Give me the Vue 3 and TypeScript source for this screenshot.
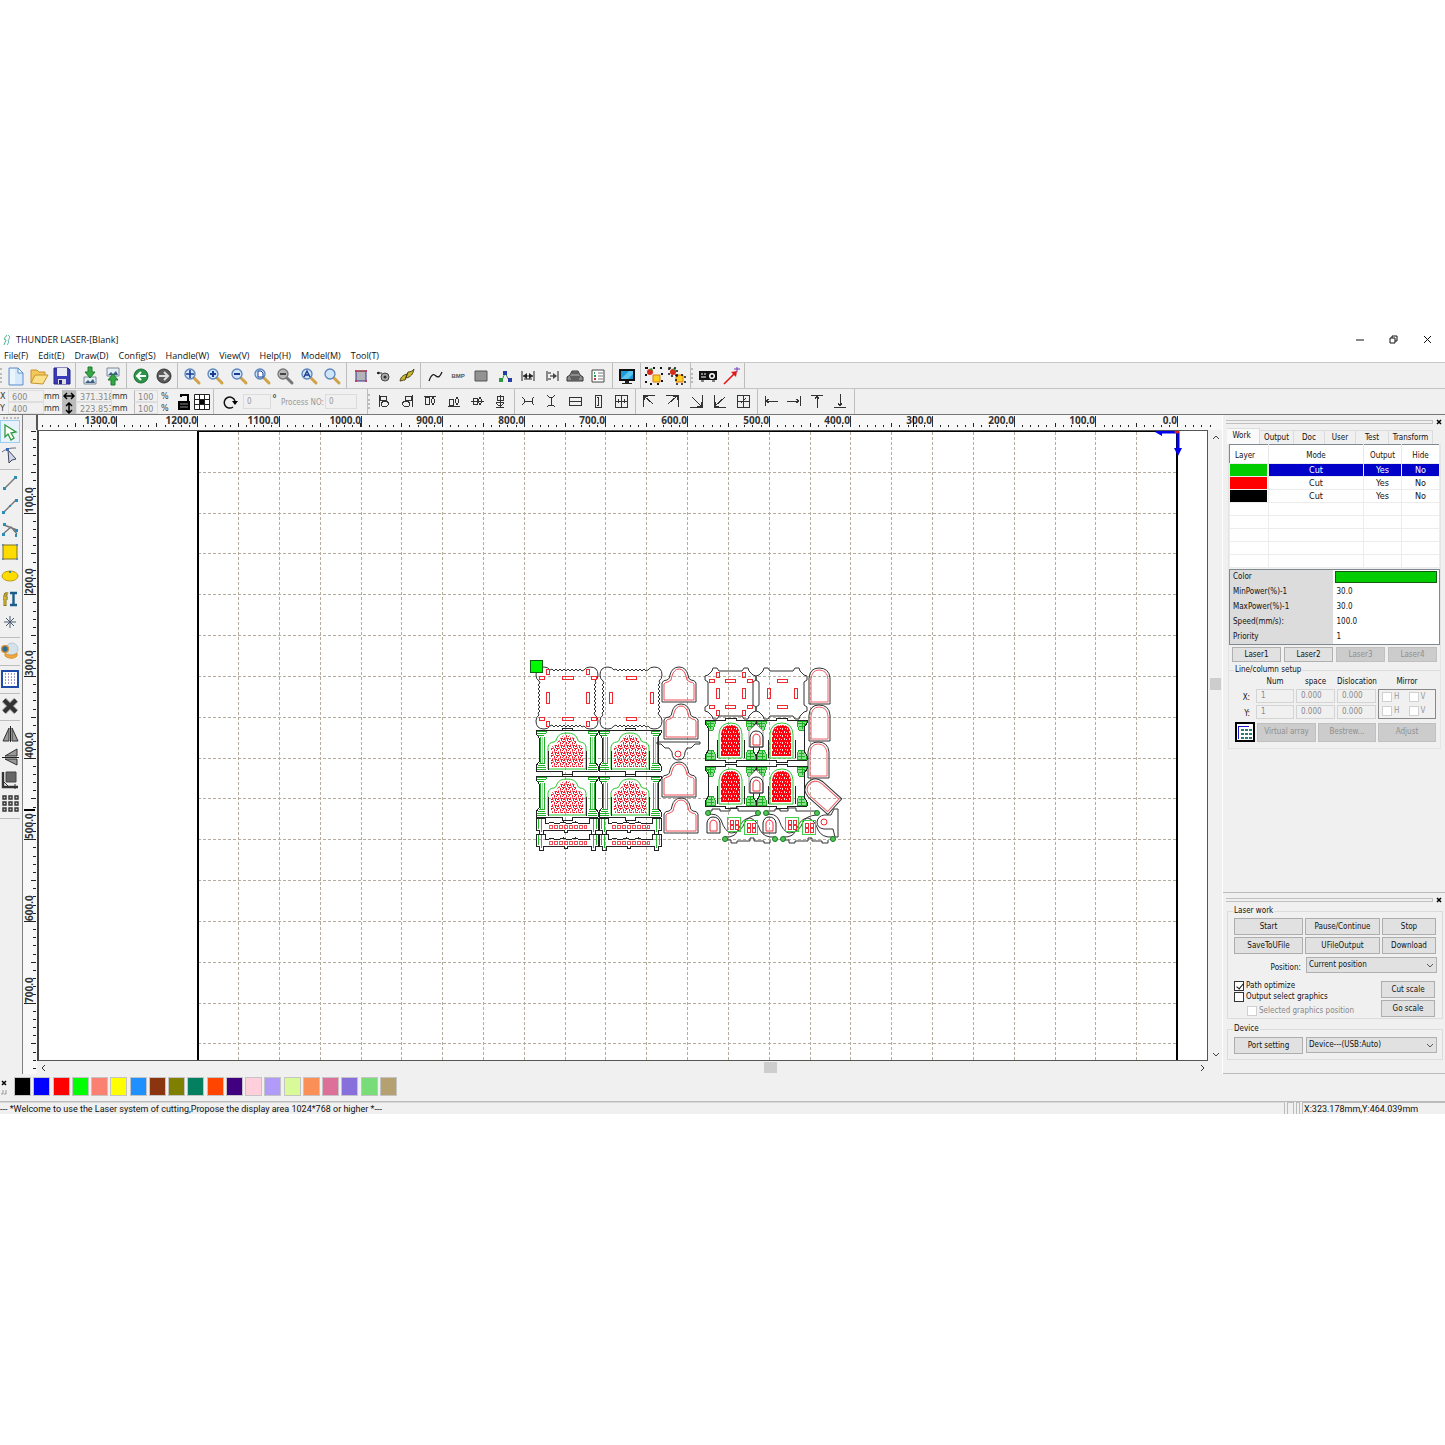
<script setup lang="ts">
import { ref } from 'vue'

interface Tool { name: string; icon: string }
interface Group { size: number; tools: Tool[]; grip?: boolean }

const t = (...names: string[]): Tool[] => names.map((n) => ({ name: n, icon: n }))

const menus = ['File(F)', 'Edit(E)', 'Draw(D)', 'Config(S)', 'Handle(W)', 'View(V)', 'Help(H)', 'Model(M)', 'Tool(T)']

const lens = (inner: string, rim = '#5a84bc', fill = '#cfe4f8', handle = '#d0a24a') =>
  `<path d="M12 12l5 5" stroke="${handle}" stroke-width="3" stroke-linecap="round"/><circle cx="8" cy="8" r="5" fill="${fill}" stroke="${rim}" stroke-width="1.3"/>${inner}`

const line = (d: string) => `<path d="${d}" fill="none" stroke="#333"/>`

const icons: Record<string, string> = {
  new: '<path d="M3 2h9l5 5v12H3z" fill="#d5e9fb" stroke="#5a8fc8"/><path d="M12 2v5h5z" fill="#fff" stroke="#5a8fc8"/><path d="M4 3h5v15H4z" fill="#fff" opacity=".5"/>',
  open: '<path d="M2 17V4h6l2 2h6v3" fill="#f3c95a" stroke="#c8922a"/><path d="M2 17l4-8h13l-5 9z" fill="#fbe08a" stroke="#c8922a"/>',
  save: '<path d="M2 2h14l2 2v14H2z" fill="#3a3ab8" stroke="#22228a"/><path d="M5 2h10v8H5z" fill="#e8eaf4"/><path d="M6 13h8v5H6z" fill="#ddd"/><path d="M7 14h3v4H7z" fill="#22228a"/>',
  import: '<path d="M4 11h12v7H4z" fill="#e6eef6" stroke="#7a8894"/><path d="M5 17l3-3 2 2 3-3 2 4z" fill="#3d5f86"/><path d="M8 1h4v5h3l-5 6-5-6h3z" fill="#35a845" stroke="#1c7a2c"/>',
  export: '<path d="M4 2h12v8H4z" fill="#e6eef6" stroke="#7a8894"/><path d="M5 9l3-3 2 2 3-3 2 4z" fill="#3d5f86"/><path d="M8 19h4v-5h3l-5-6-5 6h3z" fill="#35a845" stroke="#1c7a2c"/>',
  undo: '<circle cx="10" cy="10" r="7" fill="#2c9448" stroke="#166a2c"/><path d="M15 10H6m4-4l-4 4 4 4" fill="none" stroke="#fff" stroke-width="2"/>',
  redo: '<circle cx="10" cy="10" r="7" fill="#5a5a5a" stroke="#333"/><path d="M5 10h9m-4-4l4 4-4 4" fill="none" stroke="#ddd" stroke-width="2"/>',
  'zoom pan': lens('<path d="M8 4v8M4 8h8" stroke="#1c3c90" stroke-width="1.6"/>'),
  'zoom in': lens('<path d="M8 5v6M5 8h6" stroke="#1c3c90" stroke-width="2"/>'),
  'zoom out': lens('<path d="M5 8h6" stroke="#1c3c90" stroke-width="2"/>'),
  'zoom page': lens('<path d="M6 5h3l2 2v4H6z" fill="#fff" stroke="#1c3c90"/>'),
  'zoom data': lens('<path d="M5 8h6" stroke="#444" stroke-width="2"/>', '#777', '#b8b8b8', '#777'),
  'zoom all': lens('<path d="M5 11l3-6 3 6M6 9h4" fill="none" stroke="#1c3c90" stroke-width="1.4"/>'),
  'zoom frame': lens(''),
  'frame': '<path d="M5 5h10v10H5z" fill="#b4b4b8" stroke="#38308c"/><path d="M5 5h10" stroke="#c0392b"/><path d="M4 4h2v2H4zM14 4h2v2h-2zM4 14h2v2H4zM14 14h2v2h-2z" fill="#c04060"/>',
  'gear': '<circle cx="11" cy="11" r="4" fill="#aaa" stroke="#444"/><circle cx="11" cy="11" r="1.5" fill="#333"/><path d="M3 7h5M3 7l2-1v2z" stroke="#222" fill="#222"/>',
  'link': '<path d="M3 15c1-5 4-6 7-7l-2 6c-2 0-4 1-5 1zM9 12l2-6c2 0 5-1 6-3-1 5-3 8-8 9z" fill="#c9b62a" stroke="#4a4420"/>',
  'curve': '<path d="M4 15c3-8 5-7 7-5s4 1 6-4" fill="none" stroke="#111" stroke-width="1.2"/>',
  'fill': '<path d="M4 5h12v10H4z" fill="#929292" stroke="#555"/>',
  'nodes': '<path d="M7 14l3-7 4 7" fill="none" stroke="#2a9a4a"/><path d="M8 5h4v4H8zM13 12h4v4h-4z" fill="#283ca8"/><path d="M4 12h4v4H4z" fill="#2c9a3c"/>',
  'gap': '<path d="M4 5v10M16 5v10M5 10h10M6 13h8" stroke="#222" fill="none"/><path d="M5 10l4-3v6zM15 10l-4-3v6z" fill="#222"/>',
  'offset': '<path d="M5 5v10M16 5v10M6 7h3M6 13h3M8 10h6" stroke="#222" fill="none"/><path d="M15 10l-4-3v6z" fill="#444"/>',
  'preview': '<path d="M5 9l2-4h6l2 4 3 2v4H2v-4z" fill="#8c8c8c" stroke="#333"/><path d="M5 11h10M6 13h8M7 7h6" stroke="#333"/>',
  'list': '<path d="M4 4h12v12H4z" fill="#fff" stroke="#444"/><path d="M6 7h1M6 10h2" stroke="#2a9a4a" stroke-width="2"/><path d="M6 13h2" stroke="#c33" stroke-width="2"/><path d="M10 7h5M10 10h5M10 13h5" stroke="#777"/>',
  'monitor': '<path d="M2 3h16v12H2z" fill="#111"/><path d="M4 5h12v8H4z" fill="#1a9cd8"/><path d="M4 13l8-8h4v3l-5 5z" fill="#5cc4f0"/><path d="M8 15h4v2h3v1H5v-1h3z" fill="#222"/>',
  'group': '<circle cx="6" cy="6" r="3" fill="#d62c1c"/><path d="M5 3l3-1 1 3z" fill="#2a9a2a"/><path d="M9 9h7v7H9z" fill="#f8d020" stroke="#e07818"/><path d="M2 2h16v16H2z" fill="none" stroke="#111" stroke-width="2" stroke-dasharray="2 5"/>',
  'ungroup': '<circle cx="6" cy="6" r="3" fill="#d62c1c"/><path d="M5 3l3-1 1 3z" fill="#2a9a2a"/><path d="M9 9h7v7H9z" fill="#f8d020" stroke="#e07818"/><path d="M2 2h8v8H2zM9 9h9v9H9z" fill="none" stroke="#111" stroke-width="1.500" stroke-dasharray="2 3"/>',
  'projector': '<path d="M1 5h18v9H1z" fill="#111"/><circle cx="14" cy="10" r="3" fill="#fff"/><circle cx="14" cy="10" r="1.5" fill="#111"/><path d="M3 8h2M6 8h2M3 11h5" stroke="#fff"/><path d="M3 15h3M14 15h3" stroke="#111"/>',
  'laser': '<path d="M3 18L14 7" stroke="#e01818" stroke-width="1.6"/><path d="M10 6l6-1-1 6z" fill="#e01818"/><path d="M16 1v5M13 3h6" stroke="#7838b8"/>',
  'align left': line('M5 4v12M6 5h6v4H6zM7 12l3-2h3l2 3-2 2H8z'),
  'align right': line('M15 4v12M14 5H8v4h6zM13 12l-3-2H7l-2 3 2 2h5z'),
  'align top': line('M4 5h12M5 6h4v7H5zM13 6l2 4-2 4-2-4z'),
  'align bottom': line('M4 15h12M5 14h4V8H5zM13 6l2 4-2 4-2-4z'),
  'align middle': line('M4 10h13M6 7h4v6H6zM13 6l2 4-2 4-2-4z'),
  'align center': line('M10 4v12M7 5h6v4H7zM6 12l2-1h4l2 1-2 2H8zM6 16h8'),
  'same space h': line('M4 6l2 2v4l-2 2M6 10h8M16 6l-2 2v4l2 2'),
  'same space v': line('M6 4l2 2h4l2-2M10 6v8M6 16l2-2h4l2 2'),
  'same width': line('M4 6h12v8H4zM4 10h12'),
  'same height': line('M7 4h6v12H7zM10 6v8M9 6h2M9 14h2'),
  'same size': line('M4 4h12v12H4zM4 10h12M10 4v12M7 8v4M13 8v4'),
  'top left': line('M4 16V4h12M5 5l9 8M5 9V5h4'),
  'top right': line('M16 16V4H4M15 5l-9 8M15 9V5h-4'),
  'bottom right': line('M16 4v12H4M15 15L6 6M15 11v4h-4'),
  'bottom left': line('M4 4v12h12M5 15l10-9M5 11v4h4'),
  'page center': line('M4 4h12v12H4zM4 10h12M10 4v12M8 12l5-5'),
  'to left': line('M4 5v10M5 10h12M8 8l-3 2 3 2'),
  'to right': line('M16 5v10M15 10H3M12 8l3 2-3 2'),
  'to top': line('M4 4h12M10 5v12M8 8l2-3 2 3'),
  'to bottom': line('M4 16h12M10 3v12M8 12l2 3 2-3'),
  'select': '<path d="M5 3l11 7-5 1 3 5-3 2-3-6-3 3z" fill="#fff" stroke="#2c9a3c" stroke-width="1.3"/>',
  'node edit': '<path d="M8 5l8 9-4 1-3 3z" fill="#cdd8f0" stroke="#445"/><path d="M2 7c5-4 10-4 14-4" fill="none" stroke="#667"/><path d="M6 3h3v3H6z" fill="#3a6ab8"/>',
  'line': '<path d="M5 15L15 5" stroke="#777" stroke-width="1.4"/><path d="M3 14h3v3H3zM14 3h3v3h-3z" fill="#2c8cb8"/>',
  'polyline': '<path d="M4 16L16 4" stroke="#777" stroke-width="1.4"/><path d="M2 15h3v3H2zM9 9h2v2H9zM15 3h3v3h-3z" fill="#2c8cb8"/>',
  'bezier': '<path d="M3 15l8-7 6 7M4 6l13 5" fill="none" stroke="#777" stroke-width="1.4"/><path d="M2 14h3v3H2zM3 4h3v3H3zM15 10h3v3h-3zM15 15h2v3h-2z" fill="#2c8cb8"/>',
  'rectangle': '<path d="M3 3h14v14H3z" fill="#ffdc00" stroke="#807020"/><path d="M2 2h2v2H2zM16 2h2v2h-2zM2 16h2v2H2zM16 16h2v2h-2z" fill="#6a8ab0"/>',
  'ellipse': '<ellipse cx="10" cy="10" rx="8" ry="5" fill="#ffdc00" stroke="#b89a20"/><path d="M9 5h2v2H9z" fill="#2c8cb8"/>',
  'text': '<path d="M8 5C5 4 5 6 5 8v9M3 9h5" fill="none" stroke="#8a7418" stroke-width="3"/><path d="M8 5C5 4 5 6 5 8v8M3 9h5" fill="none" stroke="#f0d040"/><path d="M10 4h7M10 16h7M13.500 4v12" stroke="#1c5c8c" stroke-width="2.4"/>',
  'point': '<path d="M10 4v12M4 10h12M6 6l8 8M14 6l-8 8" stroke="#4a5a70"/>',
  'camera': '<circle cx="12" cy="8" r="6" fill="#d4e2ec" stroke="#b8c8d4"/><circle cx="5" cy="8" r="3.4" fill="#2c6c98" stroke="#d89428" stroke-width="1.4"/><path d="M5 15c4 3 9 3 12 0v-3c-4 3-8 3-12 0z" fill="#f0a838" stroke="#d89438"/>',
  'grid': '<path d="M2 2h16v16H2z" fill="#fff" stroke="#1c4ca8" stroke-width="2"/><path d="M5 5h11M5 8h11M5 11h11M5 14h11" stroke="#3838a0" stroke-dasharray="1 2"/>',
  'delete': '<path d="M4 4l12 12M16 4L4 16" stroke="#aaa" stroke-width="6"/><path d="M4 4l12 12M16 4L4 16" stroke="#333" stroke-width="4"/>',
  'mirror h': '<path d="M9 4v13H3zM12 4v13h6z" fill="#999" stroke="#333"/><path d="M10.500 2v16" stroke="#222"/>',
  'mirror v': '<path d="M17 2v7H5zM17 18v-6H5z" fill="#999" stroke="#333"/><path d="M2 10.500h17" stroke="#222"/>',
  'dock': '<path d="M6 2h10v10H6z" fill="#666" stroke="#444"/><path d="M3 2v15h15" fill="none" stroke="#333" stroke-width="2.400"/><path d="M3 11l6 6M15 14v5" stroke="#333"/>',
  'array': '<path d="M3 3h3v3H3zM9 3h3v3H9zM15 3h3v3h-3zM3 9h3v3H3zM9 9h3v3H9zM15 9h3v3h-3zM3 15h3v3H3zM9 15h3v3H9zM15 15h3v3h-3z" fill="#ccc" stroke="#333" stroke-width="1.400"/>'
}

const mainGroups: Group[] = [
  { size: 73, tools: t('new', 'open', 'save') },
  { size: 51, tools: t('import', 'export') },
  { size: 51, tools: t('undo', 'redo') },
  { size: 169, tools: t('zoom pan', 'zoom in', 'zoom out', 'zoom page', 'zoom data', 'zoom all', 'zoom frame') },
  { size: 74, tools: t('frame', 'gear', 'link') },
  { size: 192, tools: t('curve', 'bmp', 'fill', 'nodes', 'gap', 'offset', 'preview', 'list') },
  { size: 28, tools: t('monitor') },
  { size: 50, tools: t('group', 'ungroup') },
  { size: 51, tools: t('projector', 'laser'), grip: true }
]
const alignGroups: Group[] = [
  { size: 144, tools: t('align left', 'align right', 'align top', 'align bottom', 'align middle', 'align center') },
  { size: 121, tools: t('same space h', 'same space v', 'same width', 'same height', 'same size') },
  { size: 122, tools: t('top left', 'top right', 'bottom right', 'bottom left', 'page center') },
  { size: 97, tools: t('to left', 'to right', 'to top', 'to bottom') }
]
const drawGroups: Group[] = [
  { size: 51, tools: t('select', 'node edit') },
  { size: 168, tools: t('line', 'polyline', 'bezier', 'rectangle', 'ellipse', 'text', 'point') },
  { size: 28, tools: t('camera') },
  { size: 28, tools: t('grid') },
  { size: 27, tools: t('delete') },
  { size: 98, tools: t('mirror h', 'mirror v', 'dock', 'array') }
]

// Bed geometry: the origin of the machine is in the top right corner.
const originX = 1177
const originY = 431
const cell = 81.65
const at = (n: number) => Math.round(n)

const hMajor = Array.from({ length: 14 }, (_, i) => ({ x: at(originX - i * cell), label: `${i * 100}.0` }))
const hMinor = Array.from({ length: 144 }, (_, i) => i - 4).map((i) => ({ x: at(originX - (i * cell) / 10), tall: i % 5 === 0 })).filter((m) => m.x > 40)
const vMajor = Array.from({ length: 7 }, (_, i) => ({ y: at(originY + (i + 1) * cell), label: `${(i + 1) * 100}.0` }))
const vMinor = Array.from({ length: 79 }, (_, i) => ({ y: at(originY + (i * cell) / 10), tall: i % 5 === 0 }))
const gridX = Array.from({ length: 23 }, (_, i) => at(originX - ((i + 1) * cell) / 2))
const gridY = Array.from({ length: 60 }, (_, i) => at(originY + ((i + 1) * cell) / 2))

const wavyCorner = 'M14 3Q12 0 8 0Q0 0 0 8Q0 12 3 14' + 'l1 2l-2 2'.repeat(1) + 'l2 2l-2 2'.repeat(7) + 'l1 2'
const cutCorner = 'M14 3L12 0H8L7 3L3 7L0 8V12L3 14V37'
const slots1 = [[546, 669, 3, 5], [586, 669, 3, 5], [539, 676, 5, 3], [562, 676, 11, 3], [591, 676, 5, 3], [546, 692, 3, 11], [586, 692, 3, 11], [539, 717, 5, 3], [562, 717, 11, 3], [591, 717, 5, 3], [546, 721, 3, 5], [586, 721, 3, 5],
  [626, 676, 10, 3], [609, 692, 3, 11], [650, 692, 3, 11], [626, 717, 10, 3],
  [716, 672, 3, 5], [742, 672, 3, 5], [709, 679, 5, 3], [725, 679, 10, 3], [747, 679, 5, 3], [716, 688, 3, 10], [742, 688, 3, 10], [709, 705, 5, 3], [725, 705, 10, 3], [747, 705, 5, 3], [716, 710, 3, 5], [742, 710, 3, 5],
  [777, 679, 10, 3], [767, 688, 3, 10], [794, 688, 3, 10], [777, 705, 10, 3]]
const trefoil = 'M0 35V16Q1 13 5 13Q8 12 8 8Q10 0 17 0Q24 0 26 8Q26 12 29 13Q33 13 34 16V35Z'
const facadesA = [[536, 730], [599, 730], [536, 776], [599, 776]]
const archesA = [[662, 667], [664, 704], [662, 762], [664, 798]]
const archesB = [[809, 668], [809, 705], [808, 742]]
const facadesB = [[705, 720], [756, 720], [705, 766], [756, 766]]
const curls = [[708, 813], [758, 813], [766, 813], [817, 813], [725, 839], [775, 839], [783, 839], [833, 839]]
const litWindows = [[727, 817], [744, 820], [785, 817], [802, 820]]

const tabs = ['Work', 'Output', 'Doc', 'User', 'Test', 'Transform']
const layers = [
  { color: '#00cc00', mode: 'Cut', output: 'Yes', hide: 'No' },
  { color: '#ff0000', mode: 'Cut', output: 'Yes', hide: 'No' },
  { color: '#000000', mode: 'Cut', output: 'Yes', hide: 'No' }
]
const params = [['MinPower(%)-1', '30.0'], ['MaxPower(%)-1', '30.0'], ['Speed(mm/s):', '100.0'], ['Priority', '1']]
const palette = ['#000000', '#0000ff', '#ff0000', '#00ff00', '#fa8072', '#ffff00', '#1e90ff', '#8b3510', '#808000', '#048060', '#ff4500', '#400080', '#ffd0dc', '#b09cf8', '#d8fa98', '#fa9058', '#dc7098', '#8870dc', '#78dc78', '#b4a070']

const activeTab = ref('Work')
const selected = ref(0)
const optimize = ref(true)
const outputSelected = ref(false)
</script>

<template>
  <div class="page">
    <div class="window">
      <header class="title">
        <svg class="logo" width="10" height="12" viewBox="0 0 10 12"><path d="M5 1L2 5l2 1-2 5" fill="none" stroke="#50b880" /><path d="M6 1l2 2-2 4 1 1-2 3" fill="none" stroke="#60b8c0" /></svg>
        <span class="name">THUNDER LASER-[Blank]</span>
        <button class="win" aria-label="Minimize"><svg width="9" height="9"><path d="M1 5h8" stroke="#111" /></svg></button>
        <button class="win" aria-label="Restore"><svg width="9" height="9"><path d="M1 3h5v5H1zM3 3V1h5v5H6" fill="none" stroke="#111" /></svg></button>
        <button class="win" aria-label="Close"><svg width="9" height="9"><path d="M1 1l7 7M8 1L1 8" stroke="#111" /></svg></button>
      </header>
      <nav class="menu"><button v-for="m in menus" :key="m">{{ m }}</button></nav>

      <div class="bar">
        <i class="grip"></i>
        <template v-for="(g, i) in mainGroups" :key="i">
          <i v-if="g.grip" class="grip"></i>
          <div class="group" :style="{ width: g.size + 'px' }">
            <button v-for="b in g.tools" :key="b.name" class="tool" :aria-label="b.name">
              <span v-if="b.icon === 'bmp'" class="bmp">BMP</span>
              <svg v-else width="20" height="20" viewBox="0 0 20 20" v-html="icons[b.icon]"></svg>
            </button>
          </div>
        </template>
      </div>

      <div class="bar second">
        <div class="coords">
          <label for="px">X</label><input id="px" value="600" /><span>mm</span>
          <button class="stretch" aria-label="Width"><svg width="12" height="12"><path d="M1 6h10M4 3L1 6l3 3M8 3l3 3-3 3" fill="none" stroke="#000" stroke-width="1.500" /></svg></button>
          <input aria-label="Width" value="371.318" /><span>mm</span>
          <input class="pct" aria-label="Width percent" value="100" /><span class="unit">%</span>
          <label for="py">Y</label><input id="py" value="400" /><span>mm</span>
          <button class="stretch" aria-label="Height"><svg width="12" height="12"><path d="M6 1v10M3 4l3-3 3 3M3 8l3 3 3-3" fill="none" stroke="#000" stroke-width="1.500" /></svg></button>
          <input aria-label="Height" value="223.853" /><span>mm</span>
          <input class="pct" aria-label="Height percent" value="100" /><span class="unit">%</span>
        </div>
        <div class="locks">
          <button aria-label="Lock ratio"><svg width="16" height="18"><path d="M2 8h12v9H2z" /><path d="M5 4V2h7v6" fill="none" stroke="#000" stroke-width="2" /><path d="M4 11h8M4 14h8" stroke="#888" /></svg></button>
          <button aria-label="Anchor"><svg width="18" height="18"><path d="M1.500 1.500h15v15h-15zM1 6.500h16M1 11.500h16M6.500 1v16M11.500 1v16" fill="#fff" stroke="#222" /><path d="M7 7h4v4H7z" /></svg></button>
        </div>
        <div class="turn">
          <svg width="16" height="16"><path d="M11 13A5.500 5.500 0 1 1 13 7" fill="none" stroke="#111" stroke-width="1.500" /><path d="M10 7h6l-3 4z" /></svg>
          <input class="angle" aria-label="Angle" value="0" /><span class="deg">°</span>
          <label for="pno">Process NO:</label><input id="pno" class="pno" value="0" />
        </div>
        <div class="aligns">
          <i class="grip"></i>
          <div v-for="(g, i) in alignGroups" :key="i" class="group" :style="{ width: g.size + 'px' }">
            <button v-for="b in g.tools" :key="b.name" class="tool" :aria-label="b.name">
              <svg width="20" height="20" viewBox="0 0 20 20" shape-rendering="crispEdges" v-html="icons[b.icon]"></svg>
            </button>
          </div>
        </div>
      </div>

      <main class="main">
        <aside class="draw">
          <i class="hgrip"></i>
          <div v-for="(g, i) in drawGroups" :key="i" class="vgroup" :style="{ height: g.size + 'px' }">
            <button v-for="b in g.tools" :key="b.name" class="tool" :class="{ on: b.name === 'select' }" :aria-label="b.name">
              <svg width="20" height="20" viewBox="0 0 20 20" v-html="icons[b.icon]"></svg>
            </button>
          </div>
        </aside>

        <section class="work">
          <div class="ruler-h">
            <i class="corner"></i>
            <svg width="100%" height="15" overflow="visible">
              <svg x="100%" overflow="visible"><g transform="translate(-1222 -415)" shape-rendering="crispEdges">
                <path v-for="m in hMinor" :key="m.x" :d="`M${m.x} ${m.tall ? 423 : 425}V427`" stroke="#222" />
                <path v-for="m in hMajor" :key="m.label" :d="`M${m.x} 416V427`" stroke="#203040" />
                <text v-for="m in hMajor" :key="m.label" :x="m.x" y="424" text-anchor="end" class="mark">{{ m.label }}</text>
                <path d="M913 416V427" stroke="#000" />
              </g></svg>
            </svg>
          </div>
          <div class="middle">
            <div class="ruler-v">
              <svg width="14" height="100%" overflow="visible"><g transform="translate(-24 -430)" shape-rendering="crispEdges">
                <path v-for="m in vMinor" :key="m.y" :d="`M${m.tall ? 31 : 33} ${m.y}H36`" stroke="#222" />
                <path v-for="m in vMajor" :key="m.label" :d="`M24 ${m.y}H36`" stroke="#222" />
                <text v-for="m in vMajor" :key="m.label" :transform="`translate(33 ${m.y}) rotate(-90)`" class="mark">{{ m.label }}</text>
                <path d="M24 810H35" stroke="#000" stroke-width="2" />
              </g></svg>
            </div>
            <div class="canvas">
              <svg width="100%" height="100%">
                <svg x="100%" overflow="visible"><g transform="translate(-1207 -431)">
                  <g stroke="#b4ac9e" stroke-dasharray="3 2" shape-rendering="crispEdges">
                    <path v-for="x in gridX" :key="x" :d="`M${x} 432V1600`" />
                    <path v-for="y in gridY" :key="y" :d="`M198 ${y}H1176`" />
                  </g>
                  <path d="M198 1600V431H1177V1600" fill="none" stroke="#000" stroke-width="2" shape-rendering="crispEdges" />

                  <defs>
                    <pattern id="lattice" width="6" height="7" patternUnits="userSpaceOnUse" shape-rendering="crispEdges">
                      <path d="M1 1H3V2H2V4H1ZM4 1H5V3H4ZM3 4H5V5H4V6H3ZM0 5H1V7H0ZM2 6H3V7H2ZM3 2H4V3H3ZM2 4H3V5H2Z" fill="#f01828" />
                      <path d="M0 0H1V2H0ZM5 3H6V5H5ZM4 0H5V1H4Z" fill="#f87880" />
                    </pattern>
                    <pattern id="glass" width="5" height="7" patternUnits="userSpaceOnUse" shape-rendering="crispEdges">
                      <rect width="5" height="7" fill="#ff0010" />
                      <path d="M1 1h1v2h-1zM3 4h1v2h-1zM4 1h1v1h-1zM0 5h1v1h-1z" fill="#ffd8d8" />
                    </pattern>
                    <g id="column" fill="none" stroke="#20b028" shape-rendering="crispEdges">
                      <path d="M1 1H10M1 3H10M2 5H8M4 7V33M8 7V33M3 33H9M2 35H9M1 37H10M1 39H10M10 1V3" />
                      <path d="M6 7V33" stroke="#98dc9c" />
                      <path d="M0 0V3L3 8V32L0 36V41" stroke="#222" />
                    </g>
                    <g id="facade">
                      <use href="#column" /><use href="#column" transform="translate(62 0) scale(-1 1)" />
                      <path d="M12 39V17Q13 12 18 12Q20 12 21 8Q23 3 31 3Q39 3 41 8Q42 12 44 12Q49 12 50 17V39Z" fill="none" stroke="#28c830" />
                      <path d="M15 37V19Q16 15 20 15L24 8Q27 5 31 5Q35 5 38 8L42 15Q46 15 47 19V37Z" fill="url(#lattice)" />
                      <path d="M0 0H62M0 41H26V44H36V41H62M26 0V-2H36V0M12 40V21M50 40V21" fill="none" stroke="#222" shape-rendering="crispEdges" />
                    </g>
                    <g id="rail" fill="none" stroke="#222" shape-rendering="crispEdges">
                      <path d="M0 0H9V5H13Q16 3 18 5T24 5T30 5T36 5T42 5T48 5H53V0H62M0 0V12H3V16H7V12H28V14H31V12H55V16H59V12H62V0" />
                      <path d="M2 1V11M5 1V14M57 1V14M60 1V11" stroke="#28b830" />
                      <path d="M13 7h3v3h-3zM18 7h3v3h-3zM23 7h3v3h-3zM28 7h3v3h-3zM33 7h3v3h-3zM38 7h3v3h-3zM43 7h3v3h-3zM48 7h2v3h-2z" stroke="#f05058" />
                    </g>
                    <g id="corbel" stroke="#20b028" shape-rendering="crispEdges">
                      <path d="M1 1H10V4L8 10H3V4H1ZM3 30H8L10 34V39H1V34Z" fill="#8ce090" /><path d="M2 3H9M2 6H8M3 33H8M2 36H9M5 1V9M6 31V39" fill="none" />
                      <path d="M0 0V3L3 8V31L0 36V40" fill="none" stroke="#222" />
                    </g>
                    <g id="chapel">
                      <use href="#corbel" /><use href="#corbel" transform="translate(51 0) scale(-1 1)" />
                      <path d="M14 38V14Q15 3 26 3Q36 3 37 14V38Z" fill="none" stroke="#28c830" />
                      <path d="M16 36V14Q17 5 26 5Q34 5 35 14V36Z" fill="url(#glass)" />
                      <path d="M0 0H20V-2H31V0H51M0 40H20V42H31V40H51M12 20V38M39 20V38" fill="none" stroke="#222" shape-rendering="crispEdges" />
                    </g>
                    <g id="niche" fill="none">
                      <path d="M0 36V10Q1 0 10 0Q20 0 21 10V36Z" stroke="#333" /><path d="M2 34V11Q3 2 10 2Q18 2 19 11V34Z" stroke="#f06068" />
                    </g>
                    <g id="door" fill="none">
                      <path d="M0 16V6Q1 0 6 0Q12 0 13 6V16Z" stroke="#222" /><path d="M3 14V6Q4 3 6 3Q9 3 10 6V14Z" stroke="#f03038" />
                    </g>
                  </defs>

                  <g fill="none" stroke="#333">
                    <g v-for="x in [536, 600]" :key="x" :transform="`translate(${x} 667)`"><path v-for="k in 4" :key="k" :d="wavyCorner" :transform="`rotate(${k * 90} 31 31)`" /></g>
                    <g v-for="x in [705, 756]" :key="x" :transform="`translate(${x} 668)`"><path v-for="k in 4" :key="k" :d="cutCorner" :transform="`rotate(${k * 90} 25.5 25.5)`" /></g>
                  </g>
                  <g fill="none" stroke="#f02830" shape-rendering="crispEdges"><rect v-for="(s, i) in slots1" :key="i" :x="s[0]" :y="s[1]" :width="s[2]" :height="s[3]" /></g>
                  <use v-for="(f, i) in facadesA" :key="'a' + i" href="#facade" :x="f[0]" :y="f[1]" />
                  <use v-for="(f, i) in [[536, 818], [599, 818], [536, 834], [599, 834]]" :key="'r' + i" href="#rail" :x="f[0]" :y="f[1]" />
                  <g v-for="(a, i) in archesA" :key="'t' + i" :transform="`translate(${a[0]} ${a[1]})`" fill="none">
                    <path :d="trefoil" stroke="#333" /><path d="M2 33V17Q3 15 6 15Q10 14 10 9Q12 2 17 2Q22 2 24 9Q24 14 28 15Q31 15 32 17V33Z" stroke="#f05058" />
                  </g>
                  <path d="M657 742H700V744H695L691 748H687L685 752Q685 760 678 760Q672 760 672 752L669 748H665L661 744H657Z" fill="none" stroke="#333" />
                  <circle cx="678" cy="754" r="3" fill="none" stroke="#f02830" />
                  <use v-for="(f, i) in facadesB" :key="'b' + i" href="#chapel" :x="f[0]" :y="f[1]" />
                  <g v-for="y in [731, 777]" :key="'d' + y"><path :d="`M749 ${y + 16}V${y}L756 ${y - 7}L763 ${y}V${y + 16}Z`" fill="#fff" stroke="#999" /><use href="#door" x="750" :y="y" /></g>
                  <use v-for="(a, i) in archesB" :key="'n' + i" href="#niche" :x="a[0]" :y="a[1]" />
                  <use href="#niche" transform="translate(821 795) rotate(-48) translate(-10 -18)" />
                  <use v-for="x in [707, 763]" :key="'s' + x" href="#door" :x="x" y="817" />
                  <g fill="none" stroke="#333">
                    <path d="M707 815Q717 812 721 820Q725 832 731 833Q741 833 745 822Q748 816 758 815M725 837Q736 838 739 828Q743 818 750 818Q757 820 760 830Q764 838 775 837" />
                    <path d="M765 815Q775 812 779 820Q783 832 789 833Q799 833 803 822Q806 816 816 815M783 837Q794 838 797 828Q801 818 808 818Q815 820 818 830Q822 838 833 837" />
                    <path d="M708 811H712V809H720V811H730V808H738V811H758M767 811H775V809H780V811H788V808H796V811H816M725 840H731V843H737V841H750V838H754V841H764V843H770V840M783 840H789V843H795V841H808V838H812V841H822V843H828V840" />
                    <path d="M838 809V837H835L833 829H824Q817 828 817 822Q818 816 824 815H831L834 809Z" />
                  </g>
                  <circle cx="824" cy="822" r="3" fill="none" stroke="#f02830" />
                  <g v-for="(w, i) in litWindows" :key="'w' + i" :transform="`translate(${w[0]} ${w[1]})`" fill="none" shape-rendering="crispEdges">
                    <path d="M0 0H13V14H0Z" stroke="#40d048" /><path d="M3 3h3v4H3zM8 3h3v4H8zM3 8h3v4H3zM8 8h3v4H8z" stroke="#f03038" />
                  </g>
                  <circle v-for="(c, i) in curls" :key="'c' + i" :cx="c[0]" :cy="c[1]" r="2.500" fill="#50c858" stroke="#187820" />

                  <path d="M530 660h12v12h-12z" fill="#00f800" stroke="#0a6010" shape-rendering="crispEdges" />
                  <path d="M1177 432H1160M1178 432V450" fill="none" stroke="#00e" stroke-width="3" />
                  <path d="M1155 432l7-4v8zM1178 456l-4-8h8z" fill="#00e" />
                  <circle cx="1177" cy="431" r="2.500" fill="#e02020" />
                </g></svg>
              </svg>
            </div>
            <div class="scroll-v">
              <svg width="9" height="9"><path d="M2 6l3-3 3 3" fill="none" stroke="#444" /></svg><i class="thumb"></i>
              <svg width="9" height="9"><path d="M2 3l3 3 3-3" fill="none" stroke="#444" /></svg>
            </div>
          </div>
          <div class="scroll-h">
            <svg width="9" height="9"><path d="M6 2L3 5l3 3" fill="none" stroke="#333" /></svg><i class="thumb"></i>
            <svg width="9" height="9"><path d="M3 2l3 3-3 3" fill="none" stroke="#333" /></svg>
          </div>
        </section>

        <aside class="side">
          <section class="dock">
            <div class="dockbar"><i></i><button aria-label="Close panel"><svg width="6" height="6"><path d="M1 1l4 4M5 1L1 5" stroke="#000" stroke-width="1.500" /></svg></button></div>
            <div class="tabs"><button v-for="name in tabs" :key="name" :class="{ on: name === activeTab }" @click="activeTab = name">{{ name }}</button></div>
            <div class="pane">
              <table class="layers">
                <colgroup><col class="c1" /><col /><col class="c3" /><col class="c4" /></colgroup>
                <thead><tr><th>Layer</th><th>Mode</th><th>Output</th><th>Hide</th></tr></thead>
                <tbody>
                  <tr v-for="(l, i) in layers" :key="i" :class="{ on: i === selected }" @click="selected = i">
                    <td class="chip"><i :style="{ background: l.color }"></i></td><td>{{ l.mode }}</td><td>{{ l.output }}</td><td>{{ l.hide }}</td>
                  </tr>
                  <tr v-for="n in 5" :key="'e' + n"><td></td><td></td><td></td><td></td></tr>
                </tbody>
              </table>
              <table class="params">
                <tbody>
                  <tr><th>Color</th><td class="color"><i></i></td></tr>
                  <tr v-for="p in params" :key="p[0]"><th>{{ p[0] }}</th><td>{{ p[1] }}</td></tr>
                </tbody>
              </table>
              <div class="lasers"><button>Laser1</button><button>Laser2</button><button disabled>Laser3</button><button disabled>Laser4</button></div>
              <fieldset class="setup">
                <legend>Line/column setup</legend>
                <div class="setup-grid">
                  <span></span><span>Num</span><span>space</span><span>Dislocation</span><span>Mirror</span>
                  <label for="nx">X:</label><input id="nx" value="1" disabled /><input aria-label="X space" value="0.000" disabled /><input aria-label="X dislocation" value="0.000" disabled />
                  <div class="mirror">
                    <label><input type="checkbox" disabled />H</label><label><input type="checkbox" disabled />V</label>
                    <label><input type="checkbox" disabled />H</label><label><input type="checkbox" disabled />V</label>
                  </div>
                  <label for="ny">Y:</label><input id="ny" value="1" disabled /><input aria-label="Y space" value="0.000" disabled /><input aria-label="Y dislocation" value="0.000" disabled />
                </div>
                <div class="arrays">
                  <button class="matrix" aria-label="Array direction"><svg width="16" height="16" shape-rendering="crispEdges"><path d="M1 15V2h11" fill="none" stroke="#1818d0" /><path d="M4 5h3v2H4zM8 5h3v2H8zM12 5h3v2h-3zM4 9h3v2H4zM8 9h3v2H8zM12 9h3v2h-3zM4 13h3v2H4zM8 13h3v2H8zM12 13h3v2h-3z" fill="#2a7a78" /></svg></button>
                  <button disabled>Virtual array</button><button disabled>Bestrew...</button><button disabled>Adjust</button>
                </div>
              </fieldset>
            </div>
          </section>

          <section class="dock lower">
            <div class="dockbar"><i></i><button aria-label="Close panel"><svg width="6" height="6"><path d="M1 1l4 4M5 1L1 5" stroke="#000" stroke-width="1.500" /></svg></button></div>
            <fieldset class="laser">
              <legend>Laser work</legend>
              <div class="jobs"><button>Start</button><button>Pause/Continue</button><button>Stop</button><button>SaveToUFile</button><button>UFileOutput</button><button>Download</button></div>
              <div class="pick">
                <label for="pos">Position:</label>
                <div class="select"><select id="pos"><option>Current position</option></select><svg width="8" height="6"><path d="M1 1l3 3 3-3" fill="none" stroke="#555" /></svg></div>
              </div>
              <div class="options">
                <div class="checks">
                  <label><input v-model="optimize" type="checkbox" />Path optimize</label>
                  <label><input v-model="outputSelected" type="checkbox" />Output select graphics</label>
                  <label class="sub"><input type="checkbox" disabled />Selected graphics position</label>
                </div>
                <div class="scales"><button>Cut scale</button><button>Go scale</button></div>
              </div>
            </fieldset>
            <fieldset class="device">
              <legend>Device</legend>
              <div class="pick">
                <button>Port setting</button>
                <div class="select"><select aria-label="Device"><option>Device---(USB:Auto)</option></select><svg width="8" height="6"><path d="M1 1l3 3 3-3" fill="none" stroke="#555" /></svg></div>
              </div>
            </fieldset>
          </section>
        </aside>
      </main>

      <div class="palette">
        <div class="handle"><svg width="6" height="18"><path d="M1 4l4 4M5 4L1 8" stroke="#000" stroke-width="1.500" /><path d="M2 13v4H0M5 13v4H3" fill="none" stroke="#999" /></svg></div>
        <div class="swatches"><button v-for="c in palette" :key="c" :aria-label="c" :style="{ background: c }"></button></div>
      </div>
      <footer class="status"><span class="msg">--- *Welcome to use the Laser system of cutting,Propose the display area 1024*768 or higher *---</span><i></i><i></i><span class="pos">X:323.178mm,Y:464.039mm</span></footer>
    </div>
  </div>
</template>

<style>
body { background: #fff; }
</style>

<style scoped>
* { box-sizing: border-box; }
.page { display: flex; flex-direction: column; min-height: 100vh; padding: 329px 0 331px; font: 9px/12px 'Open Sans', sans-serif; color: #111; }
.window { flex: 1; display: flex; flex-direction: column; min-width: 1000px; background: #f0f0f0; overflow: hidden; }
button, input, select { font: inherit; color: inherit; margin: 0; padding: 0; border: 0; border-radius: 0; background: none; min-width: 0; }
svg { display: block; flex: none; }
i { display: block; }

.title { display: flex; align-items: center; height: 20px; background: #fff; padding: 1px 1px 0 2px; }
.title .name { flex: 1; padding-left: 4px; }
.win { width: 34px; display: flex; justify-content: center; }
.menu { display: flex; gap: 10px; height: 14px; padding: 1px 0 0 4px; background: #fff; border-bottom: 1px solid #c8c8c8; line-height: 12px; }

.bar { display: flex; align-items: stretch; height: 26px; border-bottom: 1px solid #c4c4c4; }
.second { height: 25px; border-bottom: 0; }
.grip { width: 3px; margin: 5px 0; border-left: 2px dotted #bbb; }
.group { display: flex; padding: 0 2px; border-right: 1px solid #bdbdbd; flex: none; }
.second .group { padding: 0 2px 1px 1px; }
.tool { flex: 1; display: flex; align-items: center; justify-content: center; overflow: visible; }
.bmp { font: bold 6px/8px 'Liberation Sans', sans-serif; color: #555; }

.coords { display: grid; grid-template-columns: 8px 36px 18px 14px 36px 22px 24px 14px; grid-template-rows: 12px 12px; font: 8px/12px 'DejaVu Sans', sans-serif; color: #333; padding-top: 1px; }
.coords input { border: 1px solid #dedede; padding: 1px 0 0 3px; color: #888; width: 100%; font-size: 9px; line-height: 10px; font-family: 'DejaVu Sans Condensed', sans-serif; }
.coords label, .coords span { padding-top: 1px; line-height: 11px; }
.coords .unit { padding-left: 3px; }
.coords .pct { border-left: 1px solid #bbb; }
.stretch { background: #bcbcbc; display: flex; justify-content: center; }
.locks { display: flex; align-items: center; gap: 1px; width: 42px; padding-left: 4px; border-right: 1px solid #bdbdbd; }
.turn { display: flex; align-items: center; width: 154px; padding-left: 8px; border-right: 1px solid #bdbdbd; font: 8px/12px 'DejaVu Sans Condensed', sans-serif; color: #999; }
.turn input { height: 15px; border: 1px solid #dcdcdc; padding-left: 3px; }
.turn .angle { width: 28px; margin-left: 5px; }
.turn .deg { width: 10px; font-size: 11px; color: #223; line-height: 20px; align-self: flex-start; padding-left: 1px; }
.turn .pno { width: 32px; margin-left: 1px; }
.turn label { white-space: nowrap; padding-top: 2px; }
.aligns { display: flex; }

.main { flex: 1; display: flex; min-height: 0; border-top: 1px solid #777; }
.draw { width: 23px; border-right: 1px solid #808080; flex: none; }
.hgrip { height: 4px; margin: 0 3px; border-bottom: 2px dotted #bbb; width: 16px; }
.vgroup { display: flex; flex-direction: column; width: 20px; padding: 1px 0 3px; border-bottom: 1px solid #bdbdbd; }
.tool.on { background: #e8f2fa; outline: 1px solid #9ccdec; outline-offset: -1px; }

.work { flex: 1; display: flex; flex-direction: column; min-width: 0; background: #fff; }
.ruler-h { display: flex; height: 15px; background: #f8f8f8; overflow-x: clip; }
.corner { width: 15px; border-right: 2px solid #555; background: #f0f0f0; flex: none; }
.ruler-h > svg { flex: 1; }
.mark { font: bold 10px 'Noto Sans', sans-serif; fill: #333; }
.middle { flex: 1; display: flex; min-height: 0; }
.ruler-v { width: 14px; background: #f8f8f8; padding-left: 1px; margin-bottom: -13px; overflow-y: clip; flex: none; }
.canvas { flex: 1; min-width: 0; min-height: 0; border: 1px solid #555; border-left: 2px solid #444; overflow: hidden; position: relative; }
.canvas > svg { position: absolute; inset: 0; }
.scroll-v { width: 14px; display: flex; flex-direction: column; align-items: center; justify-content: space-between; background: #f0f0f0; padding: 3px 0 2px; }
.thumb { background: #cdcdcd; position: relative; }
.scroll-v .thumb { width: 11px; height: 12px; top: -62px; }
.scroll-h { height: 13px; display: flex; align-items: center; justify-content: space-between; background: #f0f0f0; margin-left: 14px; padding: 0 15px 0 2px; }
.scroll-h .thumb { width: 13px; height: 11px; left: 147px; }

.side { width: 223px; flex: none; border-left: 1px solid #fff; display: flex; flex-direction: column; font: 8px/10px 'DejaVu Sans Condensed', sans-serif; }
.side button { white-space: nowrap; }
.dock { flex: 1; }
.lower { flex: none; border-top: 1px solid #bbb; border-bottom: 1px solid #bbb; padding-bottom: 13px; }
.dockbar { display: flex; align-items: center; height: 13px; padding-left: 3px; gap: 3px; }
.dockbar i { flex: 1; height: 4px; border: 1px solid #c0c0c0; border-left: 0; max-width: 207px; }
.tabs { display: grid; grid-template-columns: 33px 34px 31px 31px 33px 44px; height: 16px; padding-left: 4px; align-items: end; }
.tabs button { height: 14px; border: 1px solid #dcdcdc; border-left: 0; border-bottom: 0; padding-top: 1px; }
.tabs .on { height: 16px; background: #fafafa; padding: 0 3px 1px 0; }
.pane { margin: 0 4px 0 5px; border: 1px solid #e4e4e4; border-top: 0; height: 305px; }
table { border-collapse: collapse; width: 100%; table-layout: fixed; }
.layers { font-size: 9px; line-height: 12px; border: 1px solid #808890; background: #fff; }
.layers .c1 { width: 39px; }
.layers .c3, .layers .c4 { width: 38px; }
.layers th { height: 19px; font-weight: 400; padding: 3px 0 0; font-size: 8px; border-right: 1px solid #e8e8e8; }
.layers th:first-child { text-align: left; padding-left: 5px; }
.layers td { height: 13px; padding: 0; text-align: center; border: 1px solid #ececec; }
.layers .on td { background: #0000c8; color: #fff; }
.layers td.chip { background: #fff; }
.chip i { height: 12px; width: 37px; }
.params { margin-top: 1px; border: 1px solid #808890; background: #fff; }
.params th { width: 103px; height: 15px; background: #dcdcdc; text-align: left; font-weight: 400; padding: 0 0 0 3px; }
.params td { height: 15px; padding: 0 0 0 4px; }
.params .color { padding: 0 2px; }
.color i { height: 12px; background: #00cc00; border: 1px solid #145a14; }
.lasers { display: grid; grid-template-columns: repeat(4, 1fr); gap: 3px; padding: 2px 3px 0; }
.lasers button, .arrays button, .jobs button, .scales button, .device button { background: #e1e1e1; border: 1px solid #b0b0b0; height: 15px; }
.side button:disabled { background: #cccccc; border-color: #c0c0c0; color: #909090; }
fieldset { min-width: 0; margin: 0; border: 1px solid #dcdcdc; padding: 0; }
legend { padding: 0 1px; margin-left: 5px; line-height: 10px; }
.setup { margin-top: 3px; border-width: 1px 0 0; }
.setup-grid { display: grid; grid-template-columns: 21px 38px 39px 39px 58px; grid-template-rows: 11px 14px 14px; gap: 2px; padding: 1px 0 0 4px; line-height: 12px; }
.setup-grid > span { text-align: center; white-space: nowrap; }
.setup-grid > label { justify-content: flex-end; padding: 3px 4px 0 0; }
.setup-grid > input { border: 1px solid #d4d4d4; padding-left: 4px; color: #888; width: 100%; }
.mirror { grid-row: 2 / span 2; grid-column: 5; border: 1px solid #888; display: grid; grid-template-columns: 1fr 1fr; color: #999; padding-left: 3px; }
.side label { display: flex; align-items: center; }
input[type='checkbox'] { appearance: none; width: 10px; height: 10px; border: 1px solid #333; background: #fff; margin-right: 2px; flex: none; position: relative; }
input[type='checkbox']:disabled { border-color: #d0d0d0; }
input[type='checkbox']:checked::after { content: ''; position: absolute; left: 3px; top: 0; width: 3px; height: 6px; border: solid #111; border-width: 0 1px 1px 0; transform: rotate(40deg); }
.arrays { display: grid; grid-template-columns: 20px 59px 58px 58px; gap: 2px; padding: 3px 0 0 6px; align-items: center; }
.arrays button { height: 19px; }
.arrays .matrix { height: 20px; background: #fff; border: 2px solid #000; }

.laser, .device { margin: 0 2px 0 4px; }
.laser { height: 113px; }
.jobs { display: grid; grid-template-columns: 69px 75px 54px; grid-auto-rows: 17px; gap: 2px; padding: 2px 0 0 6px; }
.jobs button, .scales button, .device button { height: 17px; border-color: #adadad; }
.pick { display: grid; grid-template-columns: 69px 131px; gap: 3px; padding: 3px 0 0 6px; }
.pick > label { justify-content: flex-end; padding: 6px 2px 0 0; }
.select { position: relative; }
select { appearance: none; width: 100%; height: 16px; background: #e1e1e1; border: 1px solid #b0b0b0; padding-left: 2px; }
.select svg { position: absolute; right: 3px; top: 6px; }
.options { display: flex; justify-content: space-between; padding: 8px 6px 0 6px; }
.checks { display: flex; flex-direction: column; gap: 1px; white-space: nowrap; }
.checks .sub { margin: 3px 0 0 13px; color: #888; }
.scales { display: grid; gap: 2px; width: 54px; margin-right: 1px; }
.device { margin-top: 5px; height: 36px; }

.palette { height: 27px; display: flex; padding: 3px 0 0 1px; }
.handle { width: 13px; }
.swatches { display: flex; justify-content: space-between; width: 383px; height: 19px; }
.swatches button { width: 17px; outline: 1px solid #c4c4c4; outline-offset: -1px; }
.status { height: 13px; display: flex; border-top: 1px solid #bbb; font: 9px/12px Roboto, sans-serif; white-space: nowrap; }
.status .msg { flex: 1; border-right: 1px solid #bbb; border-top: 1px solid #d8d8d8; }
.status i { width: 7px; margin-left: 2px; border: solid #bbb; border-width: 1px 1px 0; }
.status i + i { width: 4px; }
.status .pos { width: 143px; border-left: 1px solid #bbb; border-top: 1px solid #bbb; padding-left: 1px; margin-left: 2px; }
</style>
